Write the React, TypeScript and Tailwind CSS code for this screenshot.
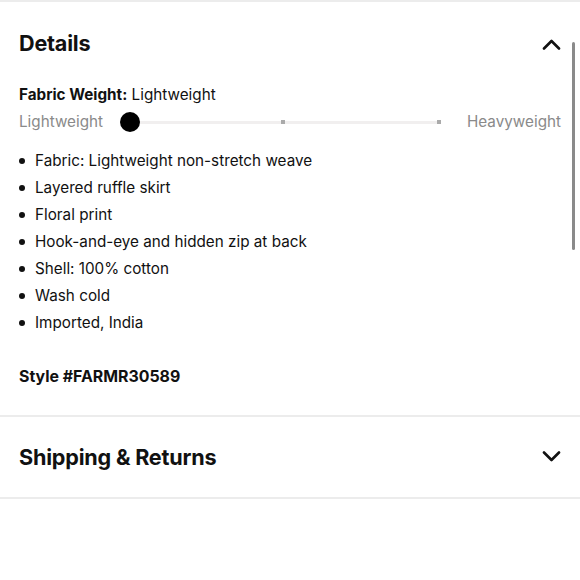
import React from "react";

const bullets: string[] = [
  "Fabric: Lightweight non-stretch weave",
  "Layered ruffle skirt",
  "Floral print",
  "Hook-and-eye and hidden zip at back",
  "Shell: 100% cotton",
  "Wash cold",
  "Imported, India",
];

const Chevron = ({ up }: { up?: boolean }) => (
  <svg width="20" height="12" viewBox="0 0 20 12" fill="none">
    <path
      d={up ? "M3 10.5 L10.5 3 L18 10.5" : "M3 1.5 L10.5 9 L18 1.5"}
      stroke="#111"
      strokeWidth="2.6"
      strokeLinecap="round"
      strokeLinejoin="round"
    />
  </svg>
);

const App = (): React.JSX.Element => {
  return (
    <div
      className="relative w-[580px] h-[580px] bg-white text-[#111] overflow-hidden"
      style={{ fontFamily: "Inter, 'Liberation Sans', sans-serif" }}
    >
      <div className="border-t-2 border-[#ececec]">
        <div className="h-[83px] flex items-center justify-between pl-[19px] pr-[19px]">
          <h2 className="text-[21.6px] font-bold tracking-[-0.2px]">Details</h2>
          <Chevron up />
        </div>

        <div className="pl-[19px] pr-[19px] text-[15.25px] leading-5">
          <span className="font-bold">Fabric Weight:</span> Lightweight
        </div>

        <div className="h-[34px] flex items-center pl-[19px] pr-[19px] text-[15.25px] text-[#8a8a8a]">
          <span>Lightweight</span>
          <div className="relative flex-1 ml-[17px] mr-[26px] h-5 flex items-center">
            <div className="w-full h-[3px] bg-[#f1efef] rounded-full" />
            <div className="absolute left-0 w-5 h-5 rounded-full bg-black" />
            <div className="absolute left-1/2 w-[4px] h-[4px] bg-[#aaa]" />
            <div className="absolute right-0 w-[4px] h-[4px] bg-[#aaa]" />
          </div>
          <span>Heavyweight</span>
        </div>

        <ul className="mt-[8px] pl-[19px] text-[15.25px] leading-[27px]">
          {bullets.map((b) => (
            <li key={b} className="flex items-center">
              <span className="w-[6px] h-[6px] rounded-full bg-[#111] mr-[10px]" />
              <span>{b}</span>
            </li>
          ))}
        </ul>

        <div className="mt-[31px] pl-[19px] text-[15.9px] leading-5 font-bold pb-[28px] border-b-2 border-[#ececec]">
          Style #FARMR30589
        </div>

        <div className="h-[82px] flex items-center justify-between pl-[19px] pr-[19px] border-b-2 border-[#ececec]">
          <h2 className="text-[21.6px] font-bold tracking-[-0.2px]">Shipping &amp; Returns</h2>
          <Chevron />
        </div>
      </div>

      <div className="absolute right-[5px] top-[42px] w-[3px] h-[208px] rounded-full bg-[#8a8a8a]" />
    </div>
  );
};

export default App;
